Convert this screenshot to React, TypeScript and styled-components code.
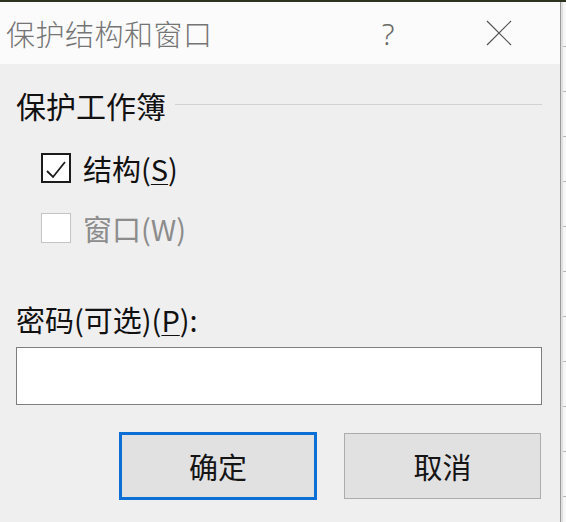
import React from "react";
import styled, { createGlobalStyle } from "styled-components";

const Global = createGlobalStyle`
  html, body { margin: 0; padding: 0; }
  body {
    font-family: "Noto Sans CJK SC", "Noto Sans", sans-serif;
    background: #f4f4f4;
  }
`;

const Page = styled.div`
  width: 566px;
  height: 522px;
  display: flex;
  overflow: hidden;
  border-top: 2px solid #2c3420;
  box-sizing: border-box;
`;

const Dialog = styled.div`
  width: 560px;
  height: 100%;
  display: flex;
  flex-direction: column;
  background: #f0eff0;
  border-right: 1px solid #9a9a9a;
`;

const Backdrop = styled.div`
  flex: 1;
  background-color: #f6f6f6;
  background-image: repeating-linear-gradient(
    to bottom,
    transparent 0px,
    transparent 44px,
    #b8b8b8 44px,
    #b8b8b8 45px
  );
  border-left: 2px solid #e0e0e0;
`;

const TitleBar = styled.div`
  height: 62px;
  flex: none;
  display: flex;
  align-items: center;
  background: #fbfbfb;
  padding-left: 6px;
`;

const Title = styled.div`
  flex: 1;
  font-size: 29px;
  font-weight: 300;
  color: #757575;
  letter-spacing: 0.5px;
`;

const HelpGlyph = styled.div`
  width: 40px;
  text-align: center;
  font-family: "Noto Sans", sans-serif;
  font-size: 30px;
  font-weight: 300;
  color: #6a6a6a;
  margin-right: 78px;
`;

const CloseBox = styled.div`
  width: 26px;
  height: 26px;
  margin-right: 48px;
  display: flex;
`;

const Body = styled.div`
  flex: 1;
  display: flex;
  flex-direction: column;
  padding: 21px 18px 0 16px;
`;

const GroupHeader = styled.div`
  height: 40px;
  display: flex;
  align-items: center;
  font-size: 30px;
  color: #111;
`;

const GroupLine = styled.div`
  flex: 1;
  height: 1px;
  background: #d2d2d2;
  margin-left: 9px;
  margin-top: -2px;
`;

const CheckRow = styled.label<{ $top: number; $disabled?: boolean }>`
  height: 40px;
  margin-top: ${(p) => p.$top}px;
  margin-left: 25px;
  display: flex;
  align-items: center;
  gap: 12px;
  font-size: 29px;
  color: ${(p) => (p.$disabled ? "#8c8c8c" : "#111")};
`;

const Box = styled.div<{ $disabled?: boolean }>`
  width: 30px;
  height: 30px;
  box-sizing: border-box;
  border: ${(p) => (p.$disabled ? "1px solid #c4c4c4" : "2px solid #1c1c1c")};
  background: #ffffff;
  display: flex;
  flex: none;
`;

const U = styled.span`
  text-decoration: underline;
  text-underline-offset: 3px;
  text-decoration-thickness: 1px;
`;

const FieldLabel = styled.div`
  height: 40px;
  margin-top: 51px;
  display: flex;
  align-items: center;
  font-size: 29px;
  color: #111;
`;

const Input = styled.div`
  height: 58px;
  margin-top: 8px;
  box-sizing: border-box;
  border: 1px solid #7e7e7e;
  background: #ffffff;
`;

const ButtonRow = styled.div`
  margin-top: 27px;
  display: flex;
  justify-content: flex-end;
  gap: 27px;
  padding-right: 1px;
`;

const Button = styled.div<{ $primary?: boolean }>`
  width: ${(p) => (p.$primary ? 198 : 197)}px;
  height: ${(p) => (p.$primary ? 68 : 66)}px;
  margin-top: ${(p) => (p.$primary ? 0 : 1)}px;
  box-sizing: border-box;
  display: flex;
  align-items: center;
  justify-content: center;
  background: #e2e1e2;
  border: ${(p) => (p.$primary ? "3px solid #0b6fd6" : "1px solid #acacac")};
  font-size: 29px;
  color: #151515;
`;

export default function App() {
  return (
    <>
      <Global />
      <Page>
        <Dialog>
          <TitleBar>
            <Title>保护结构和窗口</Title>
            <HelpGlyph>?</HelpGlyph>
            <CloseBox>
              <svg width="26" height="26" viewBox="0 0 26 26">
                <path d="M1 1 L25 25 M25 1 L1 25" stroke="#555" strokeWidth="1.2" fill="none" />
              </svg>
            </CloseBox>
          </TitleBar>
          <Body>
            <GroupHeader>
              保护工作簿
              <GroupLine />
            </GroupHeader>
            <CheckRow $top={23}>
              <Box>
                <svg width="26" height="26" viewBox="0 0 26 26">
                  <path d="M4 16 L10 22 L22 7" stroke="#1c1c1c" strokeWidth="1.8" fill="none" />
                </svg>
              </Box>
              <span>
                结构(<U>S</U>)
              </span>
            </CheckRow>
            <CheckRow $top={20} $disabled>
              <Box $disabled />
              <span>窗口(W)</span>
            </CheckRow>
            <FieldLabel>
              <span>
                密码(可选)(<U>P</U>):
              </span>
            </FieldLabel>
            <Input />
            <ButtonRow>
              <Button $primary>确定</Button>
              <Button>取消</Button>
            </ButtonRow>
          </Body>
        </Dialog>
        <Backdrop />
      </Page>
    </>
  );
}
